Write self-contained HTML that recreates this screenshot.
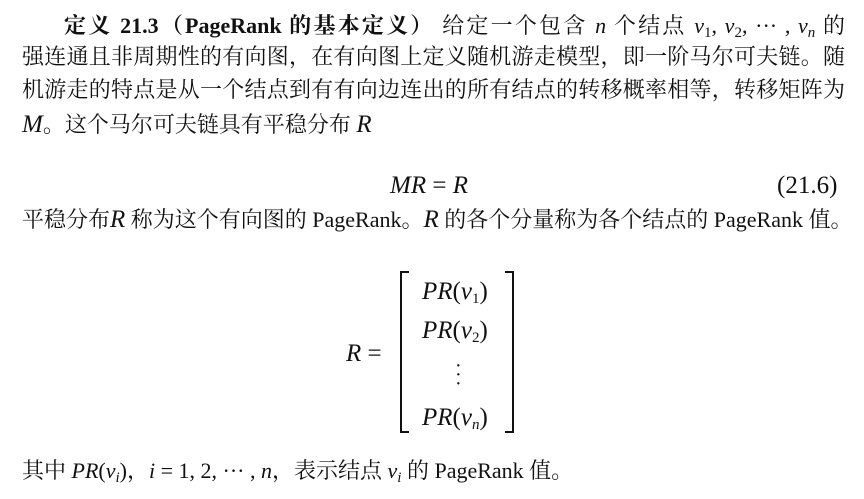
<!DOCTYPE html>
<html><head><meta charset="utf-8"><style>
body{margin:0;width:864px;height:499px;background:#fff;position:relative;overflow:hidden;font-family:"Liberation Serif","Noto Serif CJK SC",serif;color:#111;font-size:22px}
.l{position:absolute;left:22px;white-space:nowrap;line-height:26px}
.j{width:823px;text-align:justify;text-align-last:justify}
i{font-style:italic}
sub{font-size:15px;vertical-align:-4px;line-height:0}
.a{position:absolute;white-space:nowrap;line-height:26px}
.m{font-size:25px}
</style></head><body>
<div class="l" style="top:13px;left:64px;width:781px;text-align:justify;text-align-last:justify"><b>定义 21.3（PageRank 的基本定义）</b> 给定一个包含 <i>n</i> 个结点 <i>v</i><sub>1</sub>, <i>v</i><sub>2</sub>, ··· , <i>v<sub>n</sub></i> 的</div>
<div class="l j" style="top:44px">强连通且非周期性的有向图，在有向图上定义随机游走模型，即一阶马尔可夫链。随</div>
<div class="l j" style="top:77px">机游走的特点是从一个结点到有有向边连出的所有结点的转移概率相等，转移矩阵为</div>
<div class="l" style="top:112px"><i class="m">M</i>。这个马尔可夫链具有平稳分布 <i class="m">R</i></div>
<div class="a m" style="top:173px;left:390px"><i>MR</i> = <i>R</i></div>
<div class="a m" style="top:173px;left:777px">(21.6)</div>
<div class="l" style="top:207px;width:823px;text-align:justify;text-align-last:justify">平稳分布<i class="m">R</i> 称为这个有向图的 PageRank。<i class="m">R</i> 的各个分量称为各个结点的 PageRank 值。</div>
<div class="a m" style="top:341px;left:346px"><i>R</i> =</div>
<svg style="position:absolute;left:398px;top:270px" width="122" height="165"><path d="M11 2H3V162H11" fill="none" stroke="#111" stroke-width="2"/><path d="M107 2H115V162H107" fill="none" stroke="#111" stroke-width="2"/></svg>
<div class="a m" style="top:279px;left:422px"><i>PR</i>(<i>v</i><sub>1</sub>)</div>
<div class="a m" style="top:318px;left:422px"><i>PR</i>(<i>v</i><sub>2</sub>)</div>
<div class="a" style="top:362px;left:455px;line-height:9px;font-size:20px">·<br>·<br>·</div>
<div class="a m" style="top:405px;left:422px"><i>PR</i>(<i>v<sub>n</sub></i>)</div>
<div class="l" style="top:458px">其中 <i>PR</i>(<i>v<sub>i</sub></i>)，<i>i</i> = 1, 2, ··· , <i>n</i>，表示结点 <i>v<sub>i</sub></i> 的 PageRank 值。</div>
</body></html>
